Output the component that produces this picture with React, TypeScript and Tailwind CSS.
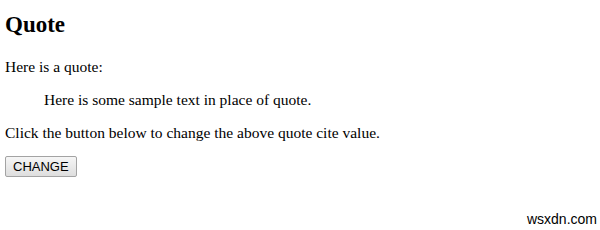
export default function App() {
  return (
    <div className="relative w-[600px] h-[230px] bg-white overflow-hidden font-['Liberation_Serif',serif] text-black">
      <div className="pl-[5px] pt-[12px]">
        <h2 className="text-[23px] font-bold leading-[26px]">Quote</h2>
        <p className="mt-[20px] text-[15.5px] leading-[18px]">Here is a quote:</p>
        <blockquote className="mt-[15px] ml-[39px] text-[15.5px] leading-[18px]">
          Here is some sample text in place of quote.
        </blockquote>
        <p className="mt-[15px] text-[15.5px] leading-[18px]">
          Click the button below to change the above quote cite value.
        </p>
        <button className="mt-[14px] h-[21px] px-[7px] border border-[#a3a3a3] rounded-[2px] bg-gradient-to-b from-[#f6f6f6] to-[#dedede] font-['Liberation_Sans',sans-serif] text-[13px] leading-none text-black">
          CHANGE
        </button>
      </div>
      <div className="absolute right-[3px] bottom-[4px] font-['Liberation_Sans',sans-serif] text-[14px] leading-none text-black">
        wsxdn.com
      </div>
    </div>
  );
}
